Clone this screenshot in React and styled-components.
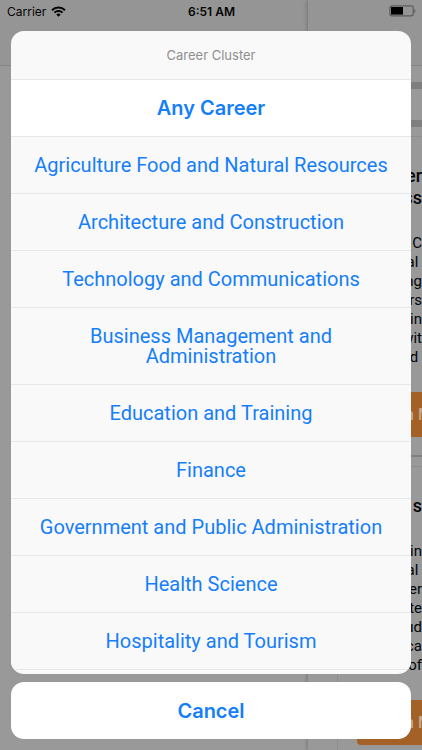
import React from 'react';
import styled, { createGlobalStyle } from 'styled-components';

const GlobalStyle = createGlobalStyle`
  * {
    box-sizing: border-box;
  }
  body {
    margin: 0;
    background: #999999;
    font-family: Inter, Roboto, sans-serif;
    color: #050505;
  }
  h2, p {
    margin: 0;
  }
`;

const Screen = styled.main`
  position: relative;
  height: 100vh;
  overflow: hidden;
  display: flex;
  flex-direction: column;
`;

const Backdrop = styled.div`
  position: absolute;
  inset: 0;
  display: flex;
`;

const MainPage = styled.div`
  flex: 1;
`;

const DetailPage = styled.div`
  width: 27%;
  background: #999999;
  box-shadow: -1px 0 4px rgba(0, 0, 0, 0.22);
`;

const NavBar = styled.div`
  height: 66px;
  background: #959595;
  border-bottom: 1px solid #848484;
`;

const Filters = styled.div`
  margin-top: 16px;
  height: 45px;
  border: solid #7f7f7f;
  border-width: 7px 0;
`;

const Card = styled.article`
  margin: 9px 0 0 29px;
  padding: 28px 0 18px 19px;
  display: flex;
  flex-direction: column;
  border: solid #8e8e8e;
  border-width: 1px 0 0 1px;
  border-bottom: 2px solid #808080;
`;

const CardTitle = styled.h2`
  font-family: Roboto, sans-serif;
  font-size: 18px;
  font-weight: 500;
  line-height: 22px;
  text-align: right;
  white-space: pre;
`;

const CardText = styled.p`
  margin-top: 25px;
  font-family: Roboto, sans-serif;
  font-size: 15px;
  line-height: 19px;
  text-align: right;
  white-space: pre;
`;

const CardButton = styled.button`
  height: 45px;
  margin-top: 25px;
  padding: 0 0 0 48px;
  overflow: hidden;
  border: 0;
  border-radius: 4px 0 0 4px;
  background: #a36027;
  color: #c4a88f;
  font: 500 16px Roboto, sans-serif;
  text-align: left;
  white-space: pre;
`;

const StatusBar = styled.header`
  position: relative;
  height: 22px;
  padding: 0 6px 0 7px;
  display: grid;
  grid-template-columns: 1fr auto 1fr;
  align-items: center;
  font-size: 12px;
`;

const Carrier = styled.div`
  display: flex;
  align-items: center;
  gap: 5px;
`;

const Clock = styled.time`
  font-weight: 600;
`;

const Battery = styled.svg`
  justify-self: end;
`;

const Overlay = styled.div`
  position: relative;
  flex: 1;
  min-height: 0;
  padding: 9px 11px 11px;
  display: flex;
  flex-direction: column;
  gap: 8px;
`;

const Sheet = styled.section`
  flex: 1;
  min-height: 0;
  display: flex;
  flex-direction: column;
  overflow: hidden;
  border-radius: 13px;
  background: #f9f9f9;
`;

const SheetTitle = styled.h2`
  flex: none;
  height: 48px;
  display: flex;
  align-items: center;
  justify-content: center;
  color: #8f8f8f;
  font-size: 13px;
  font-weight: 400;
`;

const Option = styled.button`
  flex: none;
  padding: 18px 20px;
  border: 0;
  border-top: 1px solid #e6e7ea;
  background: ${(p) => (p.$strong ? '#ffffff' : '#f9f9f9')};
  color: #157efb;
  font-family: ${(p) => (p.$strong ? 'Inter' : 'Roboto')}, sans-serif;
  font-size: 20px;
  font-weight: ${(p) => (p.$strong ? 600 : 400)};
  line-height: 20px;
  cursor: pointer;
`;

const Peek = styled.div`
  flex: 1;
  border-top: 1px solid #e6e7ea;
`;

const Cancel = styled.button`
  flex: none;
  height: 57px;
  border: 0;
  border-radius: 13px;
  background: #ffffff;
  color: #157efb;
  font: 600 20px Inter, Roboto, sans-serif;
  cursor: pointer;
`;

const careers = [
  'Agriculture Food and Natural Resources',
  'Architecture and Construction',
  'Technology and Communications',
  'Business Management and Administration',
  'Education and Training',
  'Finance',
  'Government and Public Administration',
  'Health Science',
  'Hospitality and Tourism',
];

const cards = [
  { title: 'er\nss', text: 'C\nal \nng\nrs\nin\nwit\nd ' },
  { title: 's', text: 'in\nal \ner\nte\nud\nca\nof' },
];

function WifiIcon() {
  return (
    <svg width="15" height="11" viewBox="0 0 15 11" fill="none" aria-hidden="true">
      <path d="M1 4.2a9.4 9.4 0 0 1 13 0" stroke="#000" strokeWidth="2" />
      <path d="M3.4 6.6a6 6 0 0 1 8.2 0" stroke="#000" strokeWidth="1.8" />
      <path d="M7.5 10.8 5.3 8.6a3.2 3.2 0 0 1 4.4 0z" fill="#000" />
    </svg>
  );
}

function BatteryIcon() {
  return (
    <Battery width="27" height="12" viewBox="0 0 27 12" aria-hidden="true">
      <rect x="0.8" y="0.8" width="23.4" height="10" rx="2" fill="none" stroke="#5c5c5c" strokeWidth="1.2" />
      <rect x="2" y="2" width="12" height="7.6" fill="#000" />
      <path d="M25.3 4v4c1.6-.6 1.6-3.4 0-4z" fill="#5c5c5c" />
    </Battery>
  );
}

export default function App() {
  return (
    <Screen>
      <GlobalStyle />
      <Backdrop>
        <MainPage>
          <NavBar />
        </MainPage>
        <DetailPage>
          <NavBar />
          <Filters />
          {cards.map((card) => (
            <Card key={card.title}>
              <CardTitle>{card.title}</CardTitle>
              <CardText>{card.text}</CardText>
              <CardButton>n M</CardButton>
            </Card>
          ))}
        </DetailPage>
      </Backdrop>
      <StatusBar>
        <Carrier>
          Carrier
          <WifiIcon />
        </Carrier>
        <Clock>6:51 AM</Clock>
        <BatteryIcon />
      </StatusBar>
      <Overlay>
        <Sheet role="dialog" aria-labelledby="sheet-title">
          <SheetTitle id="sheet-title">Career Cluster</SheetTitle>
          <Option $strong>Any Career</Option>
          {careers.map((name) => (
            <Option key={name}>{name}</Option>
          ))}
          <Peek />
        </Sheet>
        <Cancel>Cancel</Cancel>
      </Overlay>
    </Screen>
  );
}
